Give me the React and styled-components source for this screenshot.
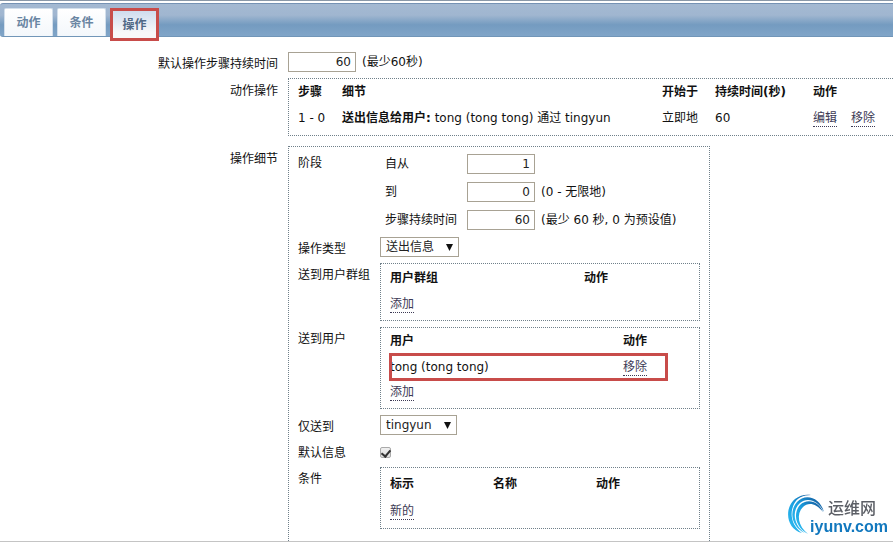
import React from 'react'
import styled, { createGlobalStyle } from 'styled-components'

const GlobalStyle = createGlobalStyle`
  * { box-sizing: border-box; }
  body {
    margin: 0;
    background: #fff;
    color: #111;
    font: 12px/16px "DejaVu Sans", "Noto Sans CJK SC", sans-serif;
  }
`

const Page = styled.div`
  height: 100vh;
  overflow: hidden;
  border-top: 1px solid #8a98a8;
  border-bottom: 1px solid #c4c4c4;
`

const TabBar = styled.nav`
  display: flex;
  align-items: flex-end;
  gap: 4px;
  height: 34px;
  margin-top: 2px;
  padding: 0 4px;
  border-top: 1px solid #7592b4;
  border-bottom: 1px solid #7196b8;
  border-radius: 3px 0 0 3px;
  background: linear-gradient(#a4b9d2 0%, #a0b6d0 35%, #749bc0 65%, #80a5c8 100%);
`

const Tab = styled.button`
  width: 49px;
  height: 28px;
  padding: 0;
  border: 1px solid #d3dfeb;
  border-bottom: 0;
  border-radius: 2px 2px 0 0;
  background: linear-gradient(#fff, #f3f7fb);
  color: #6985a2;
  font: bold 12px/16px "DejaVu Sans", "Noto Sans CJK SC", sans-serif;
`

const ActiveTab = styled(Tab)`
  height: 33px;
  border: 3px solid #c84c4a;
  border-radius: 0;
  margin-bottom: -5px;
  background: linear-gradient(#cfdcee, #f8f8fa 80%);
  color: #506886;
`

const Form = styled.form`
  display: grid;
  grid-template-columns: 278px minmax(0, 1fr);
  column-gap: 10px;
  padding-top: 15px;
`

const FieldName = styled.div`
  padding-top: ${p => p.$top || 4}px;
  text-align: ${p => p.$left ? 'left' : 'right'};
`

const Inline = styled.div`
  display: flex;
  align-items: center;
  gap: 6px;
`

const NumberBox = styled.input`
  width: 68px;
  height: 20px;
  padding: 0 4px;
  border: 1px solid #a8a294;
  background: #fff;
  color: #222;
  font: inherit;
  text-align: right;
`

const Panel = styled.div`
  border: 1px dotted #70808a;
  margin: ${p => p.$margin || '0'};
  padding: ${p => p.$pad || '4px 9px'};
  width: ${p => p.$width || 'auto'};
`

const Table = styled.table`
  width: 100%;
  border-collapse: collapse;
  table-layout: fixed;

  th, td {
    height: 26px;
    padding: 0;
    text-align: left;
    white-space: nowrap;
  }

  tbody tr:last-child td {
    height: ${p => p.$last || 26}px;
  }
`

const Link = styled.a`
  display: inline-block;
  border-bottom: 1px dotted #3d3a55;
  color: #3d3a55;
  line-height: 15px;
  text-decoration: none;
  margin-right: 14px;
`

const Details = styled.div`
  display: grid;
  grid-template-columns: 82px minmax(0, 1fr);
`

const Steps = styled.div`
  display: grid;
  grid-template-columns: 82px minmax(0, 1fr);
  row-gap: 8px;
  align-items: center;
  padding: 0 0 7px 5px;
`

const SelectWrap = styled.div`
  display: grid;
  width: ${p => p.$width}px;
  margin-top: ${p => p.$top || 0}px;
  align-items: center;

  select, svg { grid-area: 1 / 1; }
  svg { justify-self: end; margin-right: 6px; pointer-events: none; }
`

const Select = styled.select`
  appearance: none;
  width: 100%;
  height: 20px;
  padding: 0 5px;
  border: 1px solid #a8a294;
  border-radius: 0;
  background: #fff;
  color: #222;
  font: inherit;
`

const Check = styled.input`
  appearance: none;
  display: grid;
  place-content: center;
  width: 11px;
  height: 11px;
  margin: 12px 0 0;
  border: 1px solid #aaa;
  border-radius: 2px;
  background: linear-gradient(#f0f0f0, #ddd);

  &:checked::before {
    content: '';
    width: 4px;
    height: 7px;
    border: solid #333;
    border-width: 0 2px 2px 0;
    transform: rotate(40deg);
  }
`

const MarkedRow = styled.tr`
  outline: 3px solid #c84c4a;
  outline-offset: -2px;
`

const Actions = styled.div`
  grid-column: 1 / -1;
  padding-top: 11px;
`

const Brand = styled.div`
  position: fixed;
  right: 5px;
  bottom: 7px;
  display: flex;
  align-items: flex-end;
`

const BrandText = styled.div`
  margin-left: -18px;
  color: #1278be;
  font: bold 16px/16px "Liberation Sans", sans-serif;

  span {
    display: block;
    padding-left: 18px;
    color: #5b5e65;
    font: 500 16px/24px "Noto Sans CJK SC", sans-serif;
  }
`

const Dropdown = ({ id, width, value, top }) => (
  <SelectWrap $width={width} $top={top}>
    <Select id={id} defaultValue={value}>
      <option>{value}</option>
    </Select>
    <svg width="7" height="7" viewBox="0 0 7 7"><path d="M0 0h7L3.5 7z" fill="#111" /></svg>
  </SelectWrap>
)

const Logo = () => (
  <Brand>
    <svg width="40" height="41" viewBox="0 0 40 41">
      <defs>
        <linearGradient id="swoosh" x1="0" y1="1" x2="1" y2="0">
          <stop offset="0" stopColor="#2fc0f4" />
          <stop offset="0.5" stopColor="#1b9fe0" />
          <stop offset="1" stopColor="#134f92" />
        </linearGradient>
      </defs>
      <g fill="url(#swoosh)">
        <path d="M14 39C-2 35-4 14 7 5C12 1 18 0 23 1C15 1 9 4 6 10C1 20 4 32 14 39Z" />
        <path d="M17 39C3 33 1 17 9 8C17-1 32 3 36 18C30 6 19 3 12 9C3 17 6 32 17 39Z" />
        <path d="M20 40C7 33 5 19 12 11C19 4 31 7 35 18C28 9 20 8 15 13C8 20 10 32 20 40Z" />
      </g>
    </svg>
    <BrandText><span>运维网</span>iyunv.com</BrandText>
  </Brand>
)

const App = () => {
  return (
    <>
      <GlobalStyle />
      <Page>
        <TabBar>
          <Tab type="button">动作</Tab>
          <Tab type="button">条件</Tab>
          <ActiveTab type="button">操作</ActiveTab>
        </TabBar>

        <Form>
          <FieldName><label htmlFor="duration">默认操作步骤持续时间</label></FieldName>
          <Inline>
            <NumberBox id="duration" defaultValue="60" />
            <span>(最少60秒)</span>
          </Inline>

          <FieldName $top={11}>动作操作</FieldName>
          <Panel $margin="6px -2px 0 0" $pad="0 9px 4px">
            <Table>
              <colgroup>
                <col width="44" />
                <col />
                <col width="53" />
                <col width="98" />
                <col width="72" />
              </colgroup>
              <thead>
                <tr><th>步骤</th><th>细节</th><th>开始于</th><th>持续时间(秒)</th><th>动作</th></tr>
              </thead>
              <tbody>
                <tr>
                  <td>1 - 0</td>
                  <td><b>送出信息给用户:</b> tong (tong tong) 通过 tingyun</td>
                  <td>立即地</td>
                  <td>60</td>
                  <td><Link href="#edit">编辑</Link><Link href="#remove">移除</Link></td>
                </tr>
              </tbody>
            </Table>
          </Panel>

          <FieldName $top={15}>操作细节</FieldName>
          <Panel $margin="10px 0 0" $pad="7px 9px" $width="422px">
            <Details>
              <FieldName $left $top={1}>阶段</FieldName>
              <Steps>
                <label htmlFor="from">自从</label>
                <NumberBox id="from" defaultValue="1" />
                <label htmlFor="to">到</label>
                <Inline><NumberBox id="to" defaultValue="0" /><span>(0 - 无限地)</span></Inline>
                <label htmlFor="step">步骤持续时间</label>
                <Inline><NumberBox id="step" defaultValue="60" /><span>(最少 60 秒, 0 为预设值)</span></Inline>
              </Steps>

              <FieldName $left><label htmlFor="type">操作类型</label></FieldName>
              <Dropdown id="type" width={79} value="送出信息" />

              <FieldName $left $top={10}>送到用户群组</FieldName>
              <Panel $margin="6px 0 0" $pad="1px 9px 3px">
                <Table>
                  <colgroup><col width="194" /><col /></colgroup>
                  <thead><tr><th>用户群组</th><th>动作</th></tr></thead>
                  <tbody><tr><td colSpan="2"><Link href="#add-group">添加</Link></td></tr></tbody>
                </Table>
              </Panel>

              <FieldName $left $top={10}>送到用户</FieldName>
              <Panel $margin="6px 0 0" $pad="0 32px 4px 9px">
                <Table $last={24}>
                  <colgroup><col width="233" /><col /></colgroup>
                  <thead><tr><th>用户</th><th>动作</th></tr></thead>
                  <tbody>
                    <MarkedRow><td>tong (tong tong)</td><td><Link href="#remove-user">移除</Link></td></MarkedRow>
                    <tr><td colSpan="2"><Link href="#add-user">添加</Link></td></tr>
                  </tbody>
                </Table>
              </Panel>

              <FieldName $left $top={10}><label htmlFor="media">仅送到</label></FieldName>
              <Dropdown id="media" width={77} value="tingyun" top={6} />

              <FieldName $left $top={10}><label htmlFor="message">默认信息</label></FieldName>
              <Check id="message" type="checkbox" defaultChecked />

              <FieldName $left $top={10}>条件</FieldName>
              <Panel $margin="6px 0 0" $pad="3px 9px">
                <Table $last={28}>
                  <colgroup><col width="103" /><col width="103" /><col /></colgroup>
                  <thead><tr><th>标示</th><th>名称</th><th>动作</th></tr></thead>
                  <tbody><tr><td colSpan="3"><Link href="#new">新的</Link></td></tr></tbody>
                </Table>
              </Panel>

              <Actions>
                <Link href="#update">更新</Link>
                <Link href="#cancel">取消</Link>
              </Actions>
            </Details>
          </Panel>
        </Form>
      </Page>
      <Logo />
    </>
  )
}

export default App
